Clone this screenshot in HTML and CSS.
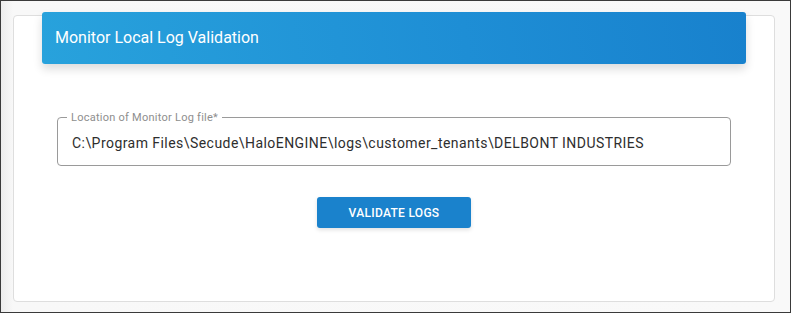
FILE: index.html
```html
<!DOCTYPE html>
<html>
	<head>
		<meta charset="utf-8" />
		<title>Monitor Local Log Validation</title>
		<link rel="stylesheet" href="styles.css">
	</head>
	<body>
		<div class="frame">
			<div class="card">
				<div class="card-header">
					<h4 class="card-title">Monitor Local Log Validation</h4>
				</div>
				<div class="card-body">
					<fieldset class="field">
						<legend>Location of Monitor Log file*</legend>
						<input type="text" id="logPath" value="C:\Program Files\Secude\HaloENGINE\logs\customer_tenants\DELBONT INDUSTRIES">
					</fieldset>
					<div class="actions">
						<button type="button" class="btn-validate">VALIDATE LOGS</button>
					</div>
				</div>
			</div>
		</div>
	</body>
</html>
```
FILE: styles.css
```css
html, body {
	margin: 0;
	padding: 0;
}
body {
	font-family: Roboto, "Liberation Sans", Arial, sans-serif;
}
.frame {
	box-sizing: border-box;
	width: 791px;
	height: 313px;
	border: 1px solid #3a3a3a;
	background: linear-gradient(90deg, #ececec 0px, #f8f8f8 12px, #f9f9f9 100%);
	padding: 14px 15px 0 12px;
}
.card {
	box-sizing: border-box;
	height: 287px;
	background: #fff;
	border: 1px solid #dedede;
	border-radius: 4px;
	padding: 0 28px;
}
.card-header {
	margin-top: -4px;
	height: 52px;
	display: flex;
	align-items: center;
	padding: 0 13px;
	border-radius: 3px;
	background: linear-gradient(80deg, #28a2dc 0%, #1e8ed5 60%, #1881cd 100%);
	box-shadow: 0 5px 10px rgba(0, 0, 0, 0.14);
}
.card-title {
	margin: 0;
	color: #fff;
	font-size: 16px;
	font-weight: 400;
	padding-bottom: 2px;
}
.card-body {
	padding: 47px 15px 0 15px;
}
.field {
	margin: 0;
	padding: 0 14px;
	height: 55px;
	box-sizing: border-box;
	border: 1px solid #9a9a9a;
	border-radius: 4px;
}
.field legend {
	font-size: 11px;
	letter-spacing: 0.25px;
	color: #8e8e8e;
	padding: 0 4px;
	margin-left: -5px;
	line-height: 13px;
}
.field input {
	border: none;
	outline: none;
	width: 100%;
	padding: 0;
	margin-top: 11px;
	font-family: Roboto, "Liberation Sans", Arial, sans-serif;
	font-size: 14px;
	letter-spacing: 0.45px;
	color: #2e2e2e;
	background: transparent;
}
.actions {
	display: flex;
	justify-content: center;
	margin-top: 31px;
}
.btn-validate {
	width: 154px;
	height: 31px;
	border: none;
	border-radius: 3px;
	background: #1a82cc;
	color: #fff;
	font-family: Roboto, "Liberation Sans", Arial, sans-serif;
	font-size: 12px;
	font-weight: 500;
	letter-spacing: 0.3px;
	box-shadow: 0 2px 4px rgba(0, 0, 0, 0.12);
	cursor: pointer;
}
```
